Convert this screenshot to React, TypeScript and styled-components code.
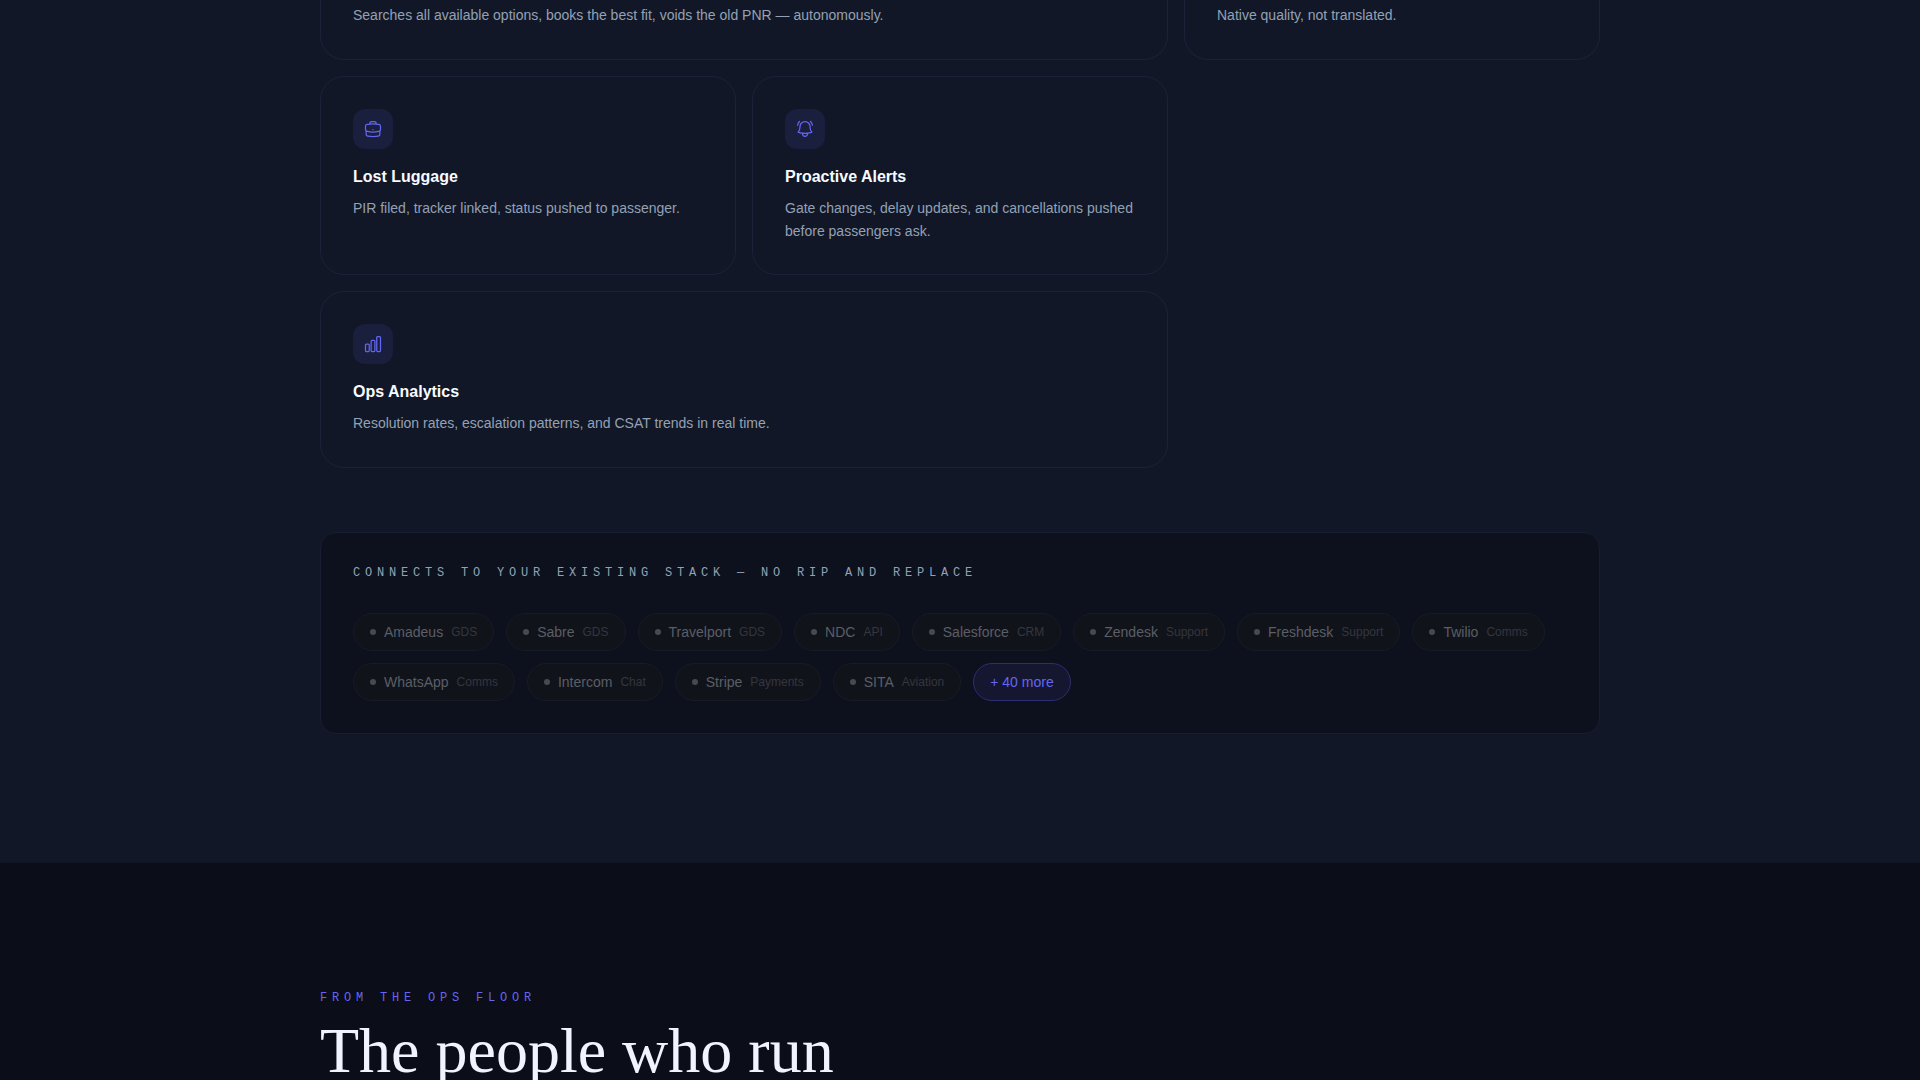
import React from "react";
import styled, { createGlobalStyle } from "styled-components";
import { HiOutlineBellAlert, HiOutlineBriefcase, HiOutlineChartBar } from "react-icons/hi2";

const Global = createGlobalStyle`
  *, *::before, *::after { box-sizing: border-box; }
  html, body { margin: 0; height: 100%; overflow: hidden; background: #0b0d18; }
  h2, h3, p { margin: 0; }
`;

const Page = styled.main`
  height: 1080px;
  overflow: hidden;
  display: flex;
  flex-direction: column;
  color: #f1f4ff;
  font-family: "Liberation Sans", Arial, sans-serif;
`;

const Features = styled.section`
  flex: none;
  background: #111726;
  padding-bottom: 128px;
`;

const Container = styled.div`
  width: 1280px;
  margin: 0 auto;
`;

const Grid = styled.div`
  display: grid;
  grid-template-columns: repeat(3, 1fr);
  grid-template-rows: 59.9px;
  gap: 16px;
  margin-bottom: 64px;
`;

const Card = styled.article<{ $wide?: boolean; $cut?: boolean }>`
  grid-column: span ${(p) => (p.$wide ? 2 : 1)};
  display: flex;
  flex-direction: column;
  justify-content: ${(p) => (p.$cut ? "flex-end" : "flex-start")};
  padding: ${(p) => (p.$cut ? "0 32px 32px" : "32px")};
  border: 1px solid #1c223a;
  border-top-width: ${(p) => (p.$cut ? 0 : 1)}px;
  border-radius: ${(p) => (p.$cut ? "0 0 24px 24px" : "24px")};
`;

const IconTile = styled.div`
  display: flex;
  align-items: center;
  justify-content: center;
  width: 40px;
  height: 40px;
  margin-bottom: 16px;
  border-radius: 12px;
  background: #191f3c;
  color: #6366f1;
  font-size: 20px;
`;

const CardTitle = styled.h3`
  margin-bottom: 8px;
  font-size: 16px;
  line-height: 24px;
  font-weight: 700;
  color: #f8faff;
`;

const CardText = styled.p`
  font-size: 14px;
  line-height: 22.75px;
  color: #94a1b5;
`;

const Stack = styled.div`
  padding: 32px;
  border: 1px solid #191d31;
  border-radius: 16px;
  background: #0d101d;
`;

const Eyebrow = styled.p<{ $accent?: boolean }>`
  font-family: "Liberation Mono", "Courier New", monospace;
  font-size: 12px;
  line-height: 16px;
  letter-spacing: 0.4em;
  text-transform: uppercase;
  color: ${(p) => (p.$accent ? "#6366f1" : "#94a1b5")};
`;

const Chips = styled.div`
  display: flex;
  flex-wrap: wrap;
  gap: 12px;
  margin-top: 32px;
`;

const Chip = styled.span`
  display: flex;
  align-items: center;
  gap: 8px;
  padding: 8px 16px;
  border: 1px solid #181b24;
  border-radius: 999px;
  background: #11131b;
  font-size: 14px;
  line-height: 20px;
  color: #5b5e66;
`;

const MoreChip = styled(Chip)`
  border-color: #2d2e72;
  background: #151630;
  color: #6366f1;
`;

const Dot = styled.i`
  width: 6px;
  height: 6px;
  border-radius: 50%;
  background: #484a52;
`;

const Kind = styled.small`
  font-size: 12px;
  line-height: 16px;
  color: #34363e;
`;

const Voices = styled.section`
  flex: 1;
  padding-top: 127px;
  border-top: 1px solid #111422;
  background: #0b0d18;
`;

const Headline = styled.h2`
  margin-top: 13px;
  font-family: "Liberation Serif", "Times New Roman", serif;
  font-size: 64px;
  line-height: 64px;
  font-weight: 400;
  color: #f1f4ff;
`;

const cards = [
  { icon: HiOutlineBriefcase, title: "Lost Luggage", text: "PIR filed, tracker linked, status pushed to passenger." },
  { icon: HiOutlineBellAlert, title: "Proactive Alerts", text: "Gate changes, delay updates, and cancellations pushed before passengers ask." },
  { icon: HiOutlineChartBar, title: "Ops Analytics", text: "Resolution rates, escalation patterns, and CSAT trends in real time.", wide: true },
];

const integrations = [
  ["Amadeus", "GDS"],
  ["Sabre", "GDS"],
  ["Travelport", "GDS"],
  ["NDC", "API"],
  ["Salesforce", "CRM"],
  ["Zendesk", "Support"],
  ["Freshdesk", "Support"],
  ["Twilio", "Comms"],
  ["WhatsApp", "Comms"],
  ["Intercom", "Chat"],
  ["Stripe", "Payments"],
  ["SITA", "Aviation"],
];

export default function App() {
  return (
    <Page>
      <Global />
      <Features>
        <Container>
          <Grid>
            <Card $wide $cut>
              <CardText>Searches all available options, books the best fit, voids the old PNR — autonomously.</CardText>
            </Card>
            <Card $cut>
              <CardText>Native quality, not translated.</CardText>
            </Card>
            {cards.map(({ icon: Icon, title, text, wide }) => (
              <Card key={title} $wide={wide}>
                <IconTile>
                  <Icon />
                </IconTile>
                <CardTitle>{title}</CardTitle>
                <CardText>{text}</CardText>
              </Card>
            ))}
          </Grid>
          <Stack>
            <Eyebrow>Connects to your existing stack — no rip and replace</Eyebrow>
            <Chips>
              {integrations.map(([name, kind]) => (
                <Chip key={name}>
                  <Dot />
                  {name}
                  <Kind>{kind}</Kind>
                </Chip>
              ))}
              <MoreChip>+ 40 more</MoreChip>
            </Chips>
          </Stack>
        </Container>
      </Features>
      <Voices>
        <Container>
          <Eyebrow $accent>From the ops floor</Eyebrow>
          <Headline>The people who run</Headline>
        </Container>
      </Voices>
    </Page>
  );
}
